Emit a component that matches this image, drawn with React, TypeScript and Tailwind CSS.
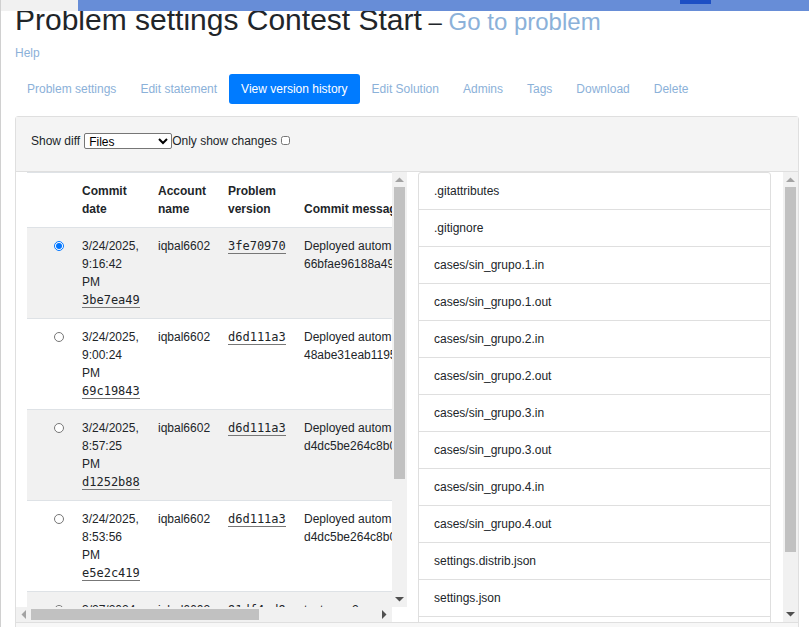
const tabs = [
  "Problem settings",
  "Edit statement",
  "View version history",
  "Edit Solution",
  "Admins",
  "Tags",
  "Download",
  "Delete",
];

type Commit = {
  date: string;
  time: string;
  period: string;
  commit: string;
  version: string;
  message: string[];
};

const commits: Commit[] = [
  { date: "3/24/2025,", time: "9:16:42", period: "PM", commit: "3be7ea49", version: "3fe70970", message: ["Deployed autom", "66bfae96188a49"] },
  { date: "3/24/2025,", time: "9:00:24", period: "PM", commit: "69c19843", version: "d6d111a3", message: ["Deployed autom", "48abe31eab1195"] },
  { date: "3/24/2025,", time: "8:57:25", period: "PM", commit: "d1252b88", version: "d6d111a3", message: ["Deployed autom", "d4dc5be264c8b0"] },
  { date: "3/24/2025,", time: "8:53:56", period: "PM", commit: "e5e2c419", version: "d6d111a3", message: ["Deployed autom", "d4dc5be264c8b0"] },
  { date: "3/27/2024,", time: "", period: "", commit: "", version: "91df4ed9", message: ["test case2"] },
];

const files = [
  ".gitattributes",
  ".gitignore",
  "cases/sin_grupo.1.in",
  "cases/sin_grupo.1.out",
  "cases/sin_grupo.2.in",
  "cases/sin_grupo.2.out",
  "cases/sin_grupo.3.in",
  "cases/sin_grupo.3.out",
  "cases/sin_grupo.4.in",
  "cases/sin_grupo.4.out",
  "settings.distrib.json",
  "settings.json",
];

function Arrow({ points, color }: { points: string; color: string }) {
  return (
    <svg width="15" height="15" viewBox="0 0 15 15" className="shrink-0" aria-hidden="true">
      <polygon points={points} fill={color} />
    </svg>
  );
}

function VerticalBar({ size }: { size: number }) {
  return (
    <div className="flex w-[15px] shrink-0 flex-col bg-[#f1f1f1]">
      <Arrow points="3,10 7.5,5.5 12,10" color="#a3a3a3" />
      <div className="min-h-0 flex-1 px-[2px]">
        <div className="bg-[#c1c1c1]" style={{ height: `${size}%` }} />
      </div>
      <Arrow points="3,5 12,5 7.5,9.5" color="#505050" />
    </div>
  );
}

function HorizontalBar({ size }: { size: number }) {
  return (
    <div className="mr-[15px] flex h-[15px] shrink-0 bg-[#f1f1f1]">
      <Arrow points="10,3 5.5,7.5 10,12" color="#a3a3a3" />
      <div className="min-w-0 flex-1 py-[2px]">
        <div className="h-full bg-[#c1c1c1]" style={{ width: `${size}%` }} />
      </div>
      <Arrow points="5,3 9.5,7.5 5,12" color="#505050" />
    </div>
  );
}

function Hash({ value }: { value: string }) {
  return (
    <abbr className="border-b border-[#777] font-['DejaVu_Sans_Mono',monospace] text-[12px] leading-none no-underline">
      {value}
    </abbr>
  );
}

function CommitTable() {
  return (
    <table className="w-[445px] table-fixed border-collapse text-left">
      <colgroup>
        <col className="w-[46px]" />
        <col className="w-[76px]" />
        <col className="w-[70px]" />
        <col className="w-[76px]" />
        <col />
      </colgroup>
      <thead>
        <tr className="h-[55px] border-t border-[#dee2e6] align-bottom">
          <th />
          <th className="p-[9px]">Commit date</th>
          <th className="p-[9px]">Account name</th>
          <th className="p-[9px]">Problem version</th>
          <th className="p-[9px] whitespace-nowrap">Commit message</th>
        </tr>
      </thead>
      <tbody>
        {commits.map((c, i) => (
          <tr key={i} className="h-[91px] border-t border-[#dee2e6] align-top odd:bg-[#f1f1f1]">
            <td className="p-[9px]">
              <div className="flex h-[18px] items-center justify-end">
                <input
                  type="radio"
                  name="commit"
                  aria-label={`Version ${c.version}`}
                  defaultChecked={i === 0}
                  className="h-[10px] w-[10px]"
                />
              </div>
            </td>
            <td className="p-[9px] whitespace-nowrap">
              <div>{c.date}</div>
              <div>{c.time}</div>
              <div>{c.period}</div>
              {c.commit && <div className="h-[18px]"><Hash value={c.commit} /></div>}
            </td>
            <td className="p-[9px]">iqbal6602</td>
            <td className="p-[9px]"><div className="h-[18px]"><Hash value={c.version} /></div></td>
            <td className="p-[9px] whitespace-nowrap">
              {c.message.map((line) => (
                <div key={line}>{line}</div>
              ))}
            </td>
          </tr>
        ))}
      </tbody>
    </table>
  );
}

export default function App() {
  return (
    <div className="h-screen overflow-hidden border-l border-[#d0d0d0] bg-white font-['Liberation_Sans',Arial,sans-serif] text-[12px] leading-[18px] text-[#212529]">
      <header className="relative z-10 flex h-[11px] bg-[#678dd7]">
        <div className="w-[77px] bg-[#f1f1f1]" />
        <div className="flex-1" />
        <div className="mr-[98px] h-1 w-[31px] bg-[#1d4fc4]" />
      </header>
      <main className="-mt-[9px] pr-[10px] pl-[14px]">
        <h1 className="mb-1 text-[30px] leading-9">
          Problem settings Contest Start
          <span className="text-[24px]">
            {" "}– <a href="#problem" className="text-[#8bb1d9]">Go to problem</a>
          </span>
        </h1>
        <a href="#help" className="block text-[#8bb1d9]">Help</a>
        <nav className="mt-3 mb-3 flex">
          {tabs.map((tab) => (
            <a
              key={tab}
              href="#tab"
              className={
                tab === "View version history"
                  ? "rounded-[3px] bg-[#007bff] px-3 py-[6px] text-white"
                  : "px-3 py-[6px] text-[#8bb1d9]"
              }
            >
              {tab}
            </a>
          ))}
        </nav>
        <section className="rounded-[3px] border border-[#dfdfdf]">
          <div className="flex h-[55px] items-start border-b border-[#dfdfdf] bg-[#f4f4f4] p-[15px]">
            <label htmlFor="diff" className="mr-1">Show diff</label>
            <select id="diff" className="mt-px h-4 w-[88px] rounded-[2px] border border-[#767676] bg-white pb-[2px] text-[12px] leading-[14px] text-black">
              <option>Files</option>
            </select>
            <label htmlFor="changes">Only show changes</label>
            <input id="changes" type="checkbox" className="mt-1 ml-1 h-[9px] w-[9px]" />
          </div>
          <div className="flex h-[450px]">
            <div className="flex min-w-0 flex-1 flex-col">
              <div className="flex min-h-0 flex-1">
                <div className="min-w-0 flex-1 overflow-hidden pl-[11px]">
                  <CommitTable />
                </div>
                <VerticalBar size={72} />
              </div>
              <HorizontalBar size={66} />
            </div>
            <div className="flex min-w-0 flex-1">
              <div className="min-w-0 flex-1 overflow-hidden px-3 pl-[11px]">
                <ul className="rounded-t-[3px] border border-[#dfdfdf]">
                  {files.map((file) => (
                    <li key={file} className="h-[37px] border-b border-[#dfdfdf] px-[15px] py-[9px]">
                      {file}
                    </li>
                  ))}
                  <li className="h-[37px]" />
                </ul>
              </div>
              <VerticalBar size={87} />
            </div>
          </div>
          <div className="h-10 border-t border-[#dfdfdf] bg-[#f7f7f7]" />
        </section>
      </main>
    </div>
  );
}
